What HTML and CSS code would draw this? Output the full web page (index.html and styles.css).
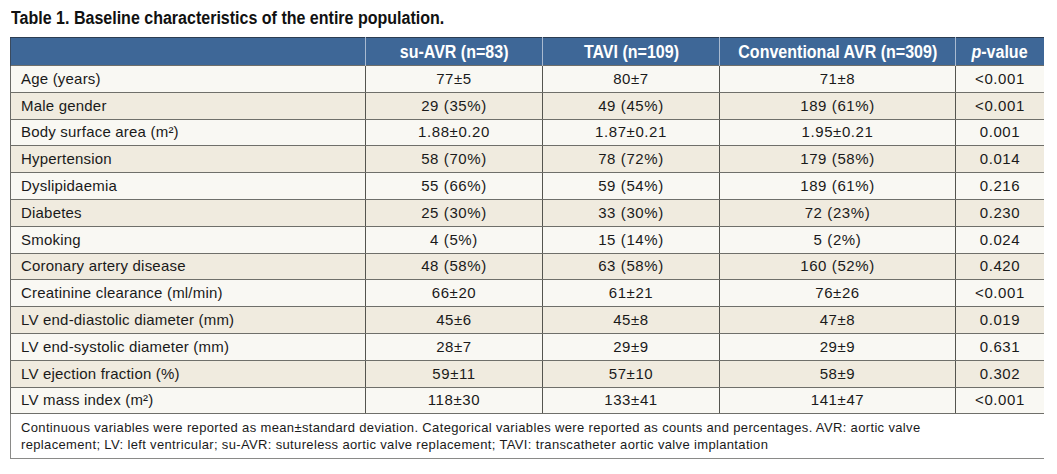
FILE: index.html
```html
<!DOCTYPE html>
<html lang="en">
<head>
<meta charset="utf-8">
<title>Table 1. Baseline characteristics</title>
<link rel="stylesheet" href="styles.css">
</head>
<body>
<p class="title"><span class="cond">Table 1. Baseline characteristics of the entire population.</span></p>
<table class="data">
  <colgroup>
    <col class="c-label">
    <col class="c-su">
    <col class="c-tavi">
    <col class="c-conv">
    <col class="c-p">
  </colgroup>
  <thead>
    <tr>
      <th></th>
      <th><span class="cond">su-AVR (n=83)</span></th>
      <th><span class="cond">TAVI (n=109)</span></th>
      <th><span class="cond">Conventional AVR (n=309)</span></th>
      <th><span class="cond"><i>p</i>-value</span></th>
    </tr>
  </thead>
  <tbody>
    <tr><td>Age (years)</td><td>77±5</td><td>80±7</td><td>71±8</td><td>&lt;0.001</td></tr>
    <tr><td>Male gender</td><td>29 (35%)</td><td>49 (45%)</td><td>189 (61%)</td><td>&lt;0.001</td></tr>
    <tr><td>Body surface area (m²)</td><td>1.88±0.20</td><td>1.87±0.21</td><td>1.95±0.21</td><td>0.001</td></tr>
    <tr><td>Hypertension</td><td>58 (70%)</td><td>78 (72%)</td><td>179 (58%)</td><td>0.014</td></tr>
    <tr><td>Dyslipidaemia</td><td>55 (66%)</td><td>59 (54%)</td><td>189 (61%)</td><td>0.216</td></tr>
    <tr><td>Diabetes</td><td>25 (30%)</td><td>33 (30%)</td><td>72 (23%)</td><td>0.230</td></tr>
    <tr><td>Smoking</td><td>4 (5%)</td><td>15 (14%)</td><td>5 (2%)</td><td>0.024</td></tr>
    <tr><td>Coronary artery disease</td><td>48 (58%)</td><td>63 (58%)</td><td>160 (52%)</td><td>0.420</td></tr>
    <tr><td>Creatinine clearance (ml/min)</td><td>66±20</td><td>61±21</td><td>76±26</td><td>&lt;0.001</td></tr>
    <tr><td>LV end-diastolic diameter (mm)</td><td>45±6</td><td>45±8</td><td>47±8</td><td>0.019</td></tr>
    <tr><td>LV end-systolic diameter (mm)</td><td>28±7</td><td>29±9</td><td>29±9</td><td>0.631</td></tr>
    <tr><td>LV ejection fraction (%)</td><td>59±11</td><td>57±10</td><td>58±9</td><td>0.302</td></tr>
    <tr><td>LV mass index (m²)</td><td>118±30</td><td>133±41</td><td>141±47</td><td>&lt;0.001</td></tr>
  </tbody>
  <tfoot>
    <tr><td colspan="5" class="note">Continuous variables were reported as mean±standard deviation. Categorical variables were reported as counts and percentages. AVR: aortic valve<br>replacement; LV: left ventricular; su-AVR: sutureless aortic valve replacement; TAVI: transcatheter aortic valve implantation</td></tr>
  </tfoot>
</table>
</body>
</html>
```

FILE: styles.css
```css
html, body {
  background: #ffffff;
}
body {
  margin: 8px 13px 0 10px;
  font-family: "Liberation Sans", Arial, sans-serif;
  color: #1a1a1a;
}
.cond {
  display: inline-block;
  transform: scaleX(0.89);
  white-space: nowrap;
}
.title {
  margin: 0 0 9px 1px;
  font-size: 18px;
  line-height: 20px;
  font-weight: bold;
  color: #111111;
}
.title .cond {
  transform-origin: left center;
}
.data {
  width: 1034px;
  border-collapse: collapse;
  table-layout: fixed;
  font-size: 15px;
}
.c-label { width: 355px; }
.c-su { width: 177px; }
.c-tavi { width: 177px; }
.c-conv { width: 236px; }
.c-p { width: 89px; }

.data thead th {
  height: 27px;
  padding: 0;
  background: #3e6797;
  color: #ffffff;
  font-size: 18px;
  font-weight: bold;
  line-height: 20px;
  text-align: center;
  border-top: 1px solid #2c3d52;
  border-left: 1px solid #a9bad0;
  border-right: 1px solid #a9bad0;
}
.data thead th:first-child {
  border-left: 1px solid #3a4a5e;
}
.data thead th:last-child {
  border-right: 1px solid #3a4a5e;
}
.data tbody td {
  height: 25.8px;
  padding: 0 4px;
  text-align: center;
  letter-spacing: 0.6px;
  line-height: 18px;
  border-top: 1px solid #6f6f6a;
  border-bottom: 1px solid #6f6f6a;
  border-left: 1px solid #55554f;
  border-right: 1px solid #55554f;
}
.data tbody td:first-child {
  text-align: left;
  letter-spacing: 0.2px;
  padding-left: 10px;
  border-left: 1px solid #6a6a66;
}
.data tbody td:last-child {
  border-right: 1px solid #6a6a66;
}
.data tbody tr:nth-child(odd) td {
  background: #f9f8f3;
}
.data tbody tr:nth-child(even) td {
  background: #f0ebdf;
}
.data tfoot td.note {
  padding: 5px 10px 5px 10px;
  font-size: 13px;
  letter-spacing: 0.35px;
  line-height: 17px;
  text-align: left;
  background: #ffffff;
  border: 1px solid #8a8a88;
}
```
